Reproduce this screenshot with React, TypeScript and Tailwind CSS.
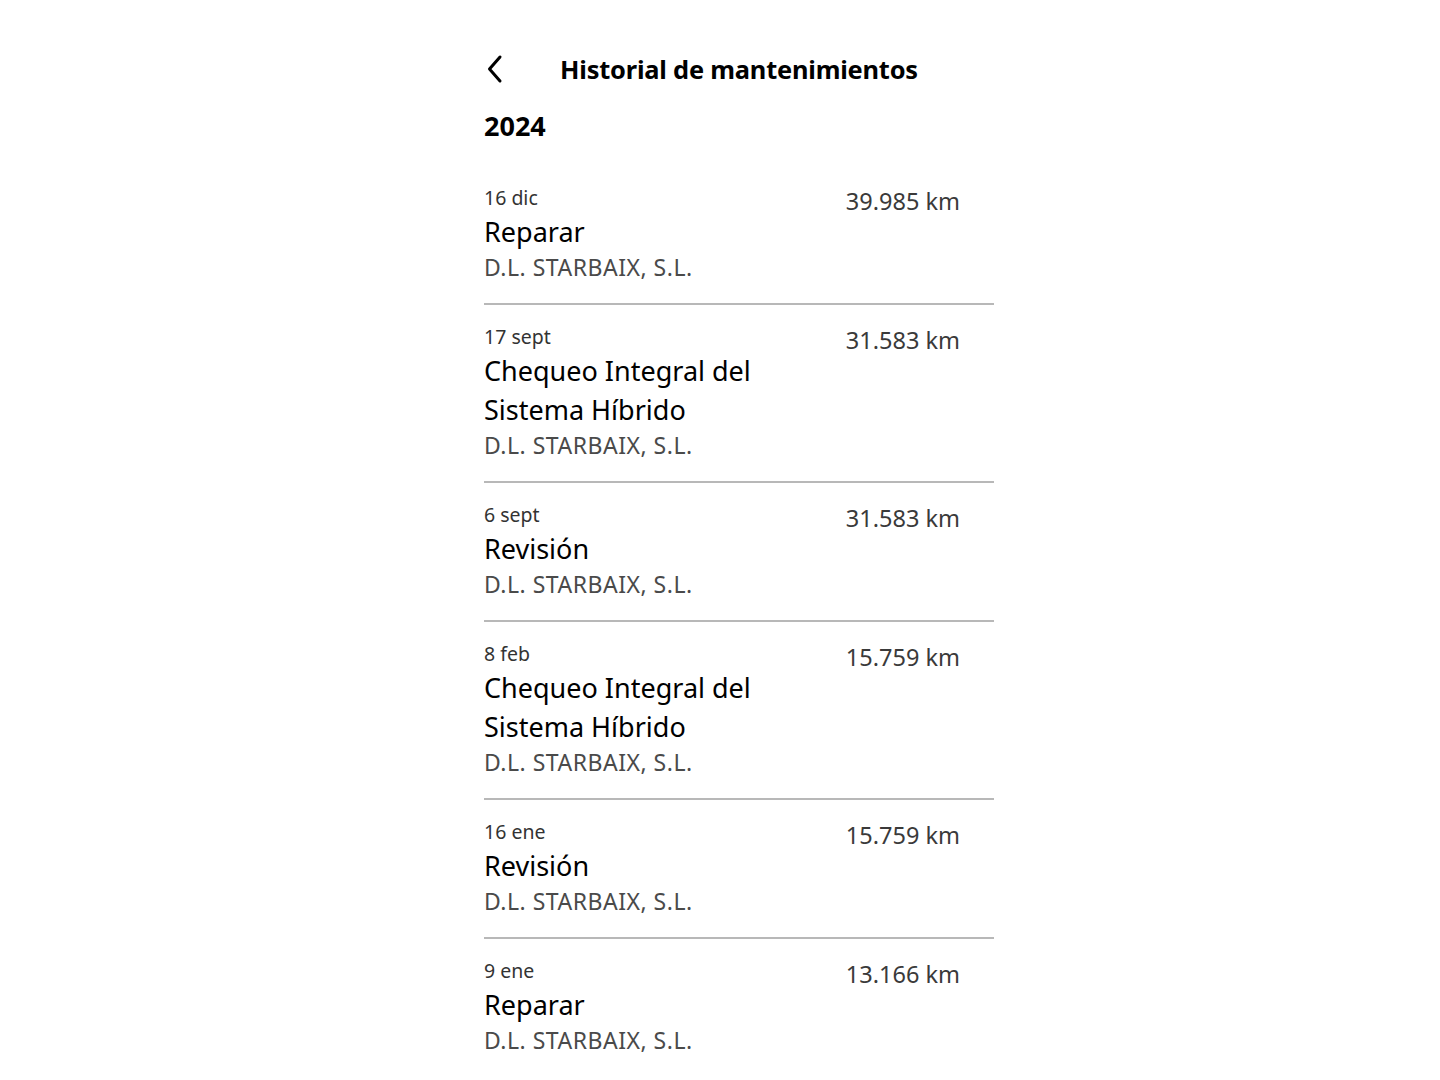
type Service = {
  date: string;
  title: string[];
  dealer: string;
  km: string;
};

const SERVICES: Service[] = [
  { date: "16 dic", title: ["Reparar"], dealer: "D.L. STARBAIX, S.L.", km: "39.985 km" },
  { date: "17 sept", title: ["Chequeo Integral del", "Sistema Híbrido"], dealer: "D.L. STARBAIX, S.L.", km: "31.583 km" },
  { date: "6 sept", title: ["Revisión"], dealer: "D.L. STARBAIX, S.L.", km: "31.583 km" },
  { date: "8 feb", title: ["Chequeo Integral del", "Sistema Híbrido"], dealer: "D.L. STARBAIX, S.L.", km: "15.759 km" },
  { date: "16 ene", title: ["Revisión"], dealer: "D.L. STARBAIX, S.L.", km: "15.759 km" },
  { date: "9 ene", title: ["Reparar"], dealer: "D.L. STARBAIX, S.L.", km: "13.166 km" },
];

export default function App() {
  return (
    <div className="min-h-[1080px] bg-white font-['Noto_Sans',sans-serif] text-black">
      <div className="ml-[484px] w-[510px] pt-[48px]">
        <header className="relative flex h-[42px] items-center justify-center">
          <button className="absolute left-[2px] top-[6px] text-black">
            <svg width="18" height="30" viewBox="0 0 18 30" fill="none">
              <polyline
                points="14,3 3.5,15 14,27"
                stroke="currentColor"
                strokeWidth="3"
                strokeLinecap="round"
                strokeLinejoin="round"
              />
            </svg>
          </button>
          <h1 className="text-[25.4px] font-bold tracking-[-0.2px]">Historial de mantenimientos</h1>
        </header>

        <h2 className="mt-[18px] text-[27px] font-bold leading-[36px]">2024</h2>

        <ul className="mt-[22px]">
          {SERVICES.map((s, i) => (
            <ServiceRow key={i} service={s} last={i === SERVICES.length - 1} />
          ))}
        </ul>
      </div>
    </div>
  );
}

function ServiceRow({ service, last }: { service: Service; last: boolean }) {
  return (
    <li
      className={`flex items-start justify-between pt-[18px] pb-[20px] pr-[34px] ${
        last ? "" : "border-b-2 border-[#b8b8b8]"
      }`}
    >
      <div>
        <p className="text-[19.5px] leading-[28px] text-[#333]">{service.date}</p>
        <p className="text-[27px] leading-[39px] text-black">
          {service.title.map((line) => (
            <span key={line} className="block">
              {line}
            </span>
          ))}
        </p>
        <p className="text-[23px] leading-[32px] tracking-[0.5px] text-[#4a4a4a]">{service.dealer}</p>
      </div>
      <span className="mt-[3px] text-[23.5px] leading-[28px] text-[#3a3a3a]">{service.km}</span>
    </li>
  );
}
